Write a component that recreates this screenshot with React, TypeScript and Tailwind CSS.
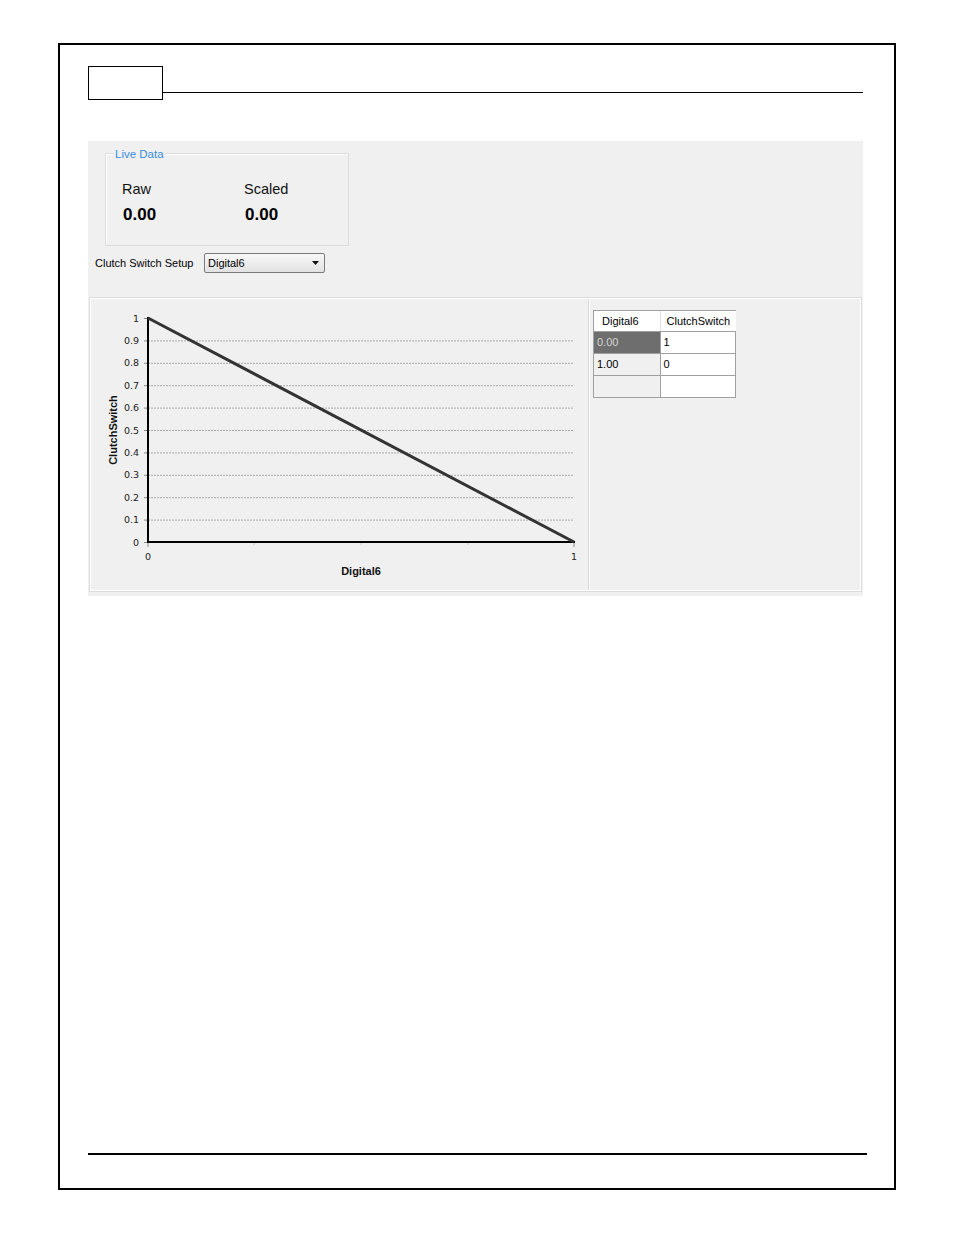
import React from "react";

const yTicks = [1, 0.9, 0.8, 0.7, 0.6, 0.5, 0.4, 0.3, 0.2, 0.1, 0];

function Chart() {
  const x0 = 57;
  const x1 = 483;
  const yTop = 19;
  const yBot = 243;
  const yFor = (v: number) => yBot - (yBot - yTop) * v;
  return (
    <svg width="497" height="292" className="block" style={{ fontFamily: "'DejaVu Sans', sans-serif" }}>
      {yTicks.map((v) => (
        <g key={v}>
          {v !== 0 && v !== 1 && (
            <line x1={x0} x2={x1} y1={yFor(v) + 0.5} y2={yFor(v) + 0.5} stroke="#a8a8a8" strokeWidth="1" strokeDasharray="2 1" />
          )}
          <line x1={x0 - 4} x2={x0} y1={yFor(v) + 0.5} y2={yFor(v) + 0.5} stroke="#888" strokeWidth="1" />
          <text x={x0 - 9} y={yFor(v) + 3.5} fontSize="9.5" textAnchor="end" fill="#222">
            {v === 1 ? "1" : v === 0 ? "0" : v.toFixed(1)}
          </text>
        </g>
      ))}
      {[163, 270, 377].map((x) => (
        <line key={x} x1={x} x2={x} y1={yBot + 1} y2={yBot + 3} stroke="#c8c8c8" strokeWidth="1" />
      ))}
      <line x1={x0} x2={x0} y1={yBot + 1} y2={yBot + 5} stroke="#888" />
      <line x1={x1} x2={x1} y1={yBot + 1} y2={yBot + 5} stroke="#888" />
      <line x1={x0} x2={x0} y1={yTop - 1} y2={yBot + 1} stroke="#000" strokeWidth="2" />
      <line x1={x0 - 1} x2={x1 + 1} y1={yBot} y2={yBot} stroke="#000" strokeWidth="2" />
      <line x1={x0} y1={yTop} x2={x1} y2={yBot} stroke="#333" strokeWidth="3" />
      <text x={x0} y={261} fontSize="9.5" textAnchor="middle" fill="#222">0</text>
      <text x={x1} y={261} fontSize="9.5" textAnchor="middle" fill="#222">1</text>
      <text x={270} y={276} fontSize="11" fontWeight="bold" textAnchor="middle" fill="#111" style={{ fontFamily: "'Liberation Sans', Arial, sans-serif" }}>Digital6</text>
      <text
        x={0}
        y={0}
        fontSize="11"
        fontWeight="bold"
        textAnchor="middle"
        fill="#111"
        transform="translate(26 131) rotate(-90)"
        style={{ fontFamily: "'Liberation Sans', Arial, sans-serif" }}
      >
        ClutchSwitch
      </text>
    </svg>
  );
}

function Grid() {
  const cell = "h-[22px] border-r border-b border-[#a0a0a0] pl-[3px] flex items-center text-[11px]";
  return (
    <div className="w-[143px] border-l border-t border-[#a0a0a0] bg-white" style={{ fontFamily: "'Liberation Sans', Arial, sans-serif" }}>
      <div className="flex h-[21px] border-b border-[#a0a0a0]">
        <div className="w-[67px] border-r border-[#e0e0e0] flex items-center pl-[8px] text-[11px] text-black">Digital6</div>
        <div className="w-[76px] flex items-center pl-[6px] text-[11px] text-black">ClutchSwitch</div>
      </div>
      <div className="flex">
        <div className={`${cell} w-[67px] bg-[#6e6e6e] text-[#d4d4d4]`}>0.00</div>
        <div className={`${cell} w-[76px] bg-white text-black`}>1</div>
      </div>
      <div className="flex">
        <div className={`${cell} w-[67px] bg-[#f0f0f0] text-black`}>1.00</div>
        <div className={`${cell} w-[76px] bg-white text-black`}>0</div>
      </div>
      <div className="flex">
        <div className={`${cell} w-[67px] bg-[#f0f0f0]`}></div>
        <div className={`${cell} w-[76px] bg-white`}></div>
      </div>
    </div>
  );
}

export default function App() {
  return (
    <div className="w-[954px] h-[1235px] bg-white pt-[43px] pl-[58px]" style={{ fontFamily: "'Liberation Sans', Arial, sans-serif" }}>
      <div className="w-[838px] h-[1147px] border-2 border-black flex flex-col">
        {/* header */}
        <div className="flex items-start mt-[21px] ml-[28px] mr-[31px]">
          <div className="w-[75px] h-[34px] border border-black shrink-0"></div>
          <div className="flex-1 h-px bg-black mt-[26px]"></div>
        </div>

        {/* gray panel */}
        <div className="mt-[41px] ml-[28px] w-[775px] h-[455px] bg-[#f0f0f0] flex flex-col">
          {/* group box */}
          <div className="relative mt-[12px] ml-[17px] w-[244px] h-[93px] border border-[#dcdcdc] shadow-[inset_1px_1px_0_#ffffff]">
            <span className="absolute -top-[7px] left-[8px] px-[1px] bg-[#f0f0f0] text-[11.5px] leading-[14px] text-[#3a8ee0]">
              Live Data
            </span>
            <div className="flex pt-[27px] pl-[16px]">
              <div className="w-[122px] flex flex-col">
                <span className="text-[14.5px] leading-[17px] text-[#111]">Raw</span>
                <span className="mt-[7px] ml-[1px] text-[17px] leading-[20px] font-bold text-black">0.00</span>
              </div>
              <div className="flex flex-col">
                <span className="text-[14.5px] leading-[17px] text-[#111]">Scaled</span>
                <span className="mt-[7px] ml-[1px] text-[17px] leading-[20px] font-bold text-black">0.00</span>
              </div>
            </div>
          </div>

          {/* selector row */}
          <div className="flex items-center mt-[7px] ml-[7px]">
            <span className="text-[11px] text-black w-[109px]">Clutch Switch Setup</span>
            <div className="w-[121px] h-[20px] border border-[#7a7a7a] rounded-[2px] bg-gradient-to-b from-[#f8f8f8] to-[#e2e2e2] flex items-center pl-[3px] pr-[5px]">
              <span className="flex-1 text-[11px] text-black pt-[1px]">Digital6</span>
              <svg width="7" height="4" viewBox="0 0 7 4"><path d="M0 0 H7 L3.5 4 Z" fill="#111" /></svg>
            </div>
          </div>

          {/* chart panel */}
          <div className="mt-[25px] ml-[2px] w-[771px] h-[293px] border border-[#ffffff] shadow-[0_0_0_1px_#dcdcdc] flex">
            <div className="w-[498px] border-r border-[#d8d8d8]">
              <Chart />
            </div>
            <div className="flex-1 pl-[3px] pt-[11px] border-l border-white">
              <Grid />
            </div>
          </div>
        </div>

        <div className="flex-1"></div>
        {/* footer line */}
        <div className="ml-[28px] mr-[27px] h-[2px] bg-black mb-[33px]"></div>
      </div>
    </div>
  );
}
